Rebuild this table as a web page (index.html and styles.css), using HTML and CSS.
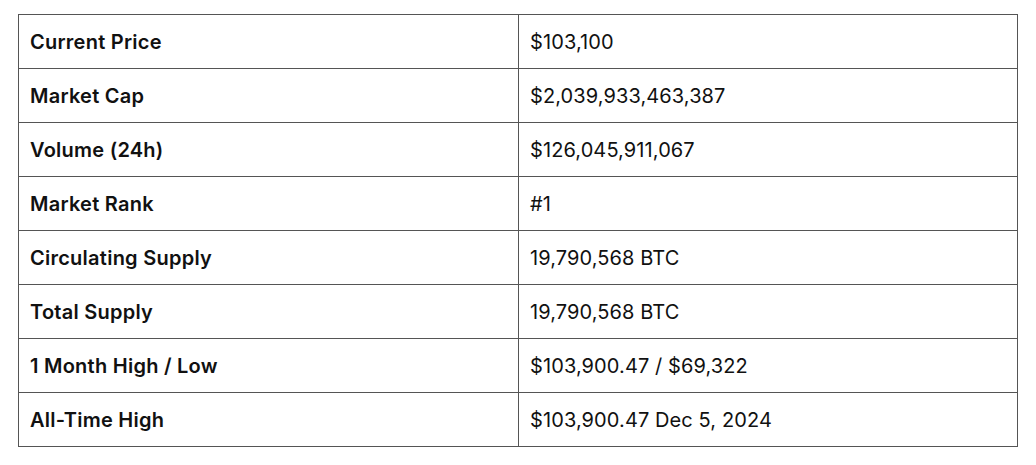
FILE: index.html
```html
<!DOCTYPE html>
<html>
<head>
<meta charset="utf-8">
<link rel="stylesheet" href="styles.css">
</head>
<body>
<table class="stats">
  <tr><th>Current Price</th><td>$103,100</td></tr>
  <tr><th>Market Cap</th><td>$2,039,933,463,387</td></tr>
  <tr><th>Volume (24h)</th><td>$126,045,911,067</td></tr>
  <tr><th>Market Rank</th><td>#1</td></tr>
  <tr><th>Circulating Supply</th><td>19,790,568 BTC</td></tr>
  <tr><th>Total Supply</th><td>19,790,568 BTC</td></tr>
  <tr><th>1 Month High / Low</th><td>$103,900.47 / $69,322</td></tr>
  <tr><th>All-Time High</th><td>$103,900.47 Dec 5, 2024</td></tr>
</table>
</body>
</html>
```

FILE: styles.css
```css
html, body {
  margin: 0;
  background: #fff;
}
body {
  padding: 14px 18px;
  font-family: Inter, "Liberation Sans", sans-serif;
  color: #111;
}
.stats {
  width: 1000px;
  border-collapse: collapse;
  table-layout: fixed;
}
.stats th, .stats td {
  border: 1px solid #555;
  height: 54px;
  padding: 0 0 0 11px;
  box-sizing: border-box;
  text-align: left;
  vertical-align: middle;
  font-size: 20px;
}
.stats th {
  font-weight: 600;
  width: 500px;
  letter-spacing: 0.25px;
}
.stats td {
  font-weight: 400;
  letter-spacing: 0.1px;
}
```
